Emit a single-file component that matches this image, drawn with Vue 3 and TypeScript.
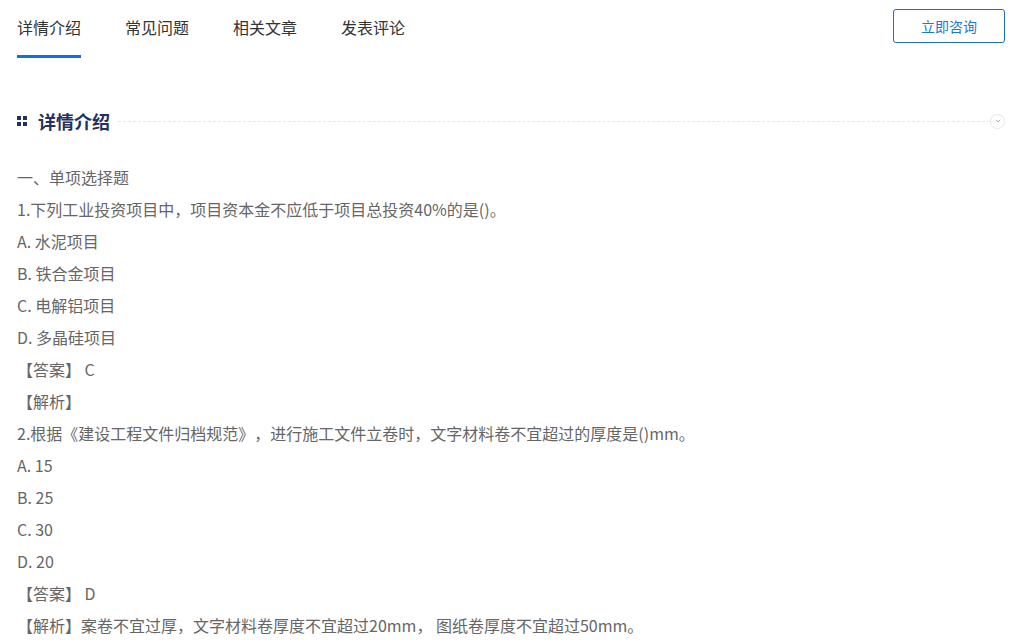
<script setup lang="ts">
const tabs: string[] = ['详情介绍', '常见问题', '相关文章', '发表评论']
const lines: string[] = [
  '一、单项选择题',
  '1.下列工业投资项目中，项目资本金不应低于项目总投资40%的是()。',
  'A. 水泥项目',
  'B. 铁合金项目',
  'C. 电解铝项目',
  'D. 多晶硅项目',
  '【答案】 C',
  '【解析】',
  '2.根据《建设工程文件归档规范》，进行施工文件立卷时，文字材料卷不宜超过的厚度是()mm。',
  'A. 15',
  'B. 25',
  'C. 30',
  'D. 20',
  '【答案】 D',
  '【解析】案卷不宜过厚，文字材料卷厚度不宜超过20mm， 图纸卷厚度不宜超过50mm。'
]
</script>

<template>
  <div class="page">
    <header class="nav">
      <div class="tabs">
        <div v-for="(t, i) in tabs" :key="t" class="tab" :class="{ active: i === 0 }">{{ t }}</div>
      </div>
      <button class="consult">立即咨询</button>
    </header>
    <section class="heading">
      <span class="dots"><i></i><i></i><i></i><i></i></span>
      <h2>详情介绍</h2>
      <span class="rule"></span>
      <span class="toggle">
        <svg width="6" height="4" viewBox="0 0 6 4"><path d="M.8.8 3 3 5.2.8" fill="none" stroke="#a9adb3" stroke-width="1"/></svg>
      </span>
    </section>
    <article class="body">
      <p v-for="(l, i) in lines" :key="i">{{ l }}</p>
    </article>
  </div>
</template>

<style>
html, body { margin: 0; background: #fff; overflow: hidden; }
</style>

<style scoped>
.page {
  width: 1021px;
  height: 643px;
  overflow: hidden;
  box-sizing: border-box;
  padding: 0 16px 0 17px;
  font-family: "Noto Sans CJK SC", "Liberation Sans", sans-serif;
  text-spacing-trim: space-all;
}
.nav {
  display: flex;
  justify-content: space-between;
  align-items: flex-start;
  height: 58px;
}
.tabs { display: flex; gap: 44px; }
.tab {
  width: 64px;
  height: 58px;
  box-sizing: border-box;
  padding-top: 15px;
  font-size: 16px;
  line-height: 24px;
  color: #333;
  white-space: nowrap;
}
.tab.active { border-bottom: 3px solid #0f70e6; }
.consult {
  margin-top: 9px;
  width: 112px;
  height: 34px;
  padding: 0;
  background: #fff;
  border: 1px solid #1e6fc8;
  border-radius: 3px;
  color: #1e78d2;
  font: 14px/32px "Noto Sans CJK SC", "Liberation Sans", sans-serif;
}
.heading {
  display: flex;
  align-items: center;
  height: 28px;
  margin-top: 49px;
}
.dots {
  display: grid;
  grid-template-columns: 4px 4px;
  gap: 2px;
  width: 10px;
  margin-right: 11px;
}
.dots i { width: 4px; height: 4px; background: #24305e; display: block; }
h2 {
  margin: 0;
  font-size: 18px;
  line-height: 28px;
  font-weight: 700;
  color: #24305e;
  white-space: nowrap;
}
.rule {
  flex: 1;
  margin-left: 8px;
  border-top: 1px dashed #e4e6e9;
}
.toggle {
  width: 13px;
  height: 13px;
  border: 1px solid #e4e6e9;
  border-radius: 50%;
  display: flex;
  align-items: center;
  justify-content: center;
}
.body { margin-top: 26px; }
p {
  margin: 0;
  height: 32px;
  font-size: 16px;
  line-height: 32px;
  color: #666;
  white-space: nowrap;
}
</style>
